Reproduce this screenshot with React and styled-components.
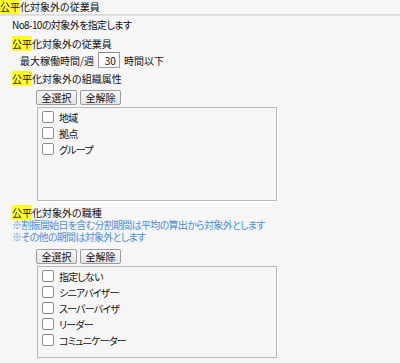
import React from 'react';
import styled, { createGlobalStyle } from 'styled-components';

const GlobalStyle = createGlobalStyle`
  html, body {
    margin: 0;
    padding: 0;
    background: #f6f6f6;
  }
  body {
    font-family: "Noto Sans CJK JP", "Noto Sans", sans-serif;
    font-size: 10px;
    color: #111;
    font-feature-settings: "palt";
  }
`;

const orgItems = ['地域', '拠点', 'グループ'];
const jobItems = ['指定しない', 'シニアバイザー', 'スーパーバイザ', 'リーダー', 'コミュニケーター'];

const Mark = styled.span`
  background: #ffff22;
`;

const Title = styled.div`
  height: 14px;
  line-height: 14px;
  border-bottom: 2px solid #dedede;
  white-space: nowrap;
`;

const Body = styled.div`
  padding-left: 12px;
`;

const Line = styled.div`
  line-height: ${p => p.$lh || 14}px;
  margin-top: ${p => p.$mt || 0}px;
  letter-spacing: ${p => p.$ls || 0}px;
  white-space: nowrap;
`;

const Notice = styled.div`
  line-height: 12px;
  letter-spacing: -0.7px;
  color: #4a8fdc;
  white-space: nowrap;
`;

const HoursRow = styled.div`
  display: flex;
  align-items: center;
  gap: 4px;
  height: 16px;
  margin: 1px 0 0 8px;
`;

const NumberBox = styled.input`
  box-sizing: border-box;
  width: 22px;
  height: 16px;
  margin: 0;
  padding: 0 3px 0 0;
  border: 1px solid #a0a0a0;
  border-top-color: #8a8a8a;
  background: #fff;
  font: inherit;
  color: #111;
  text-align: right;
`;

const ButtonRow = styled.div`
  display: flex;
  gap: 3px;
  margin: ${p => p.$mt}px 0 0 24px;
`;

const SmallButton = styled.button`
  box-sizing: border-box;
  height: 15px;
  width: 41px;
  padding: 0;
  border: 1px solid #9c9c9c;
  border-radius: 2px;
  background: linear-gradient(#f8f8f8, #e4e4e4);
  font: inherit;
  line-height: 13px;
  color: #111;
`;

const ListBox = styled.div`
  box-sizing: border-box;
  width: 240px;
  height: ${p => p.$h}px;
  margin: 2px 0 0 25px;
  padding: 1px 0 0 4px;
  border: 1px solid #b8b8b8;
  box-shadow: 1px 1px 0 #fff;
  display: flex;
  flex-direction: column;
`;

const Item = styled.label`
  display: flex;
  align-items: center;
  gap: 5px;
  height: 16px;
  letter-spacing: -0.8px;
`;

const Check = styled.input`
  appearance: none;
  box-sizing: border-box;
  width: 12px;
  height: 12px;
  margin: 0;
  border: 1px solid #8c8c8c;
  border-radius: 2px;
  background: #fff;
`;

const Choices = ({ items, height, top }) => (
  <>
    <ButtonRow $mt={top}>
      <SmallButton>全選択</SmallButton>
      <SmallButton>全解除</SmallButton>
    </ButtonRow>
    <ListBox $h={height}>
      {items.map(name => (
        <Item key={name}>
          <Check type="checkbox" />
          {name}
        </Item>
      ))}
    </ListBox>
  </>
);

const App = () => {
  return (
    <>
      <GlobalStyle />
      <Title><Mark>公平</Mark>化対象外の従業員</Title>
      <Body>
        <Line $mt={2} $ls={-0.6}>No8-10の対象外を指定します</Line>
        <Line $mt={5}><Mark>公平</Mark>化対象外の従業員</Line>
        <HoursRow>
          <span>最大稼働時間/週</span>
          <NumberBox defaultValue="30" />
          <span>時間以下</span>
        </HoursRow>
        <Line $mt={4}><Mark>公平</Mark>化対象外の組織属性</Line>
        <Choices items={orgItems} height={94} top={4} />
        <Line $mt={6} $lh={12}><Mark>公平</Mark>化対象外の職種</Line>
        <Notice>※割振開始日を含む分割期間は平均の算出から対象外とします</Notice>
        <Notice>※その他の期間は対象外とします</Notice>
        <Choices items={jobItems} height={92} top={6} />
      </Body>
    </>
  );
};

export default App;
